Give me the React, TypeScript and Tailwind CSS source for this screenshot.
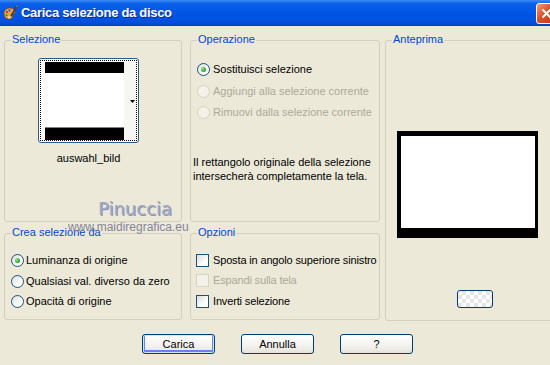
import React from "react";

const FONT = { fontFamily: '"Liberation Sans", Arial, sans-serif' };

function GroupBox({
  label,
  className,
  children,
}: {
  label: string;
  className?: string;
  children?: React.ReactNode;
}) {
  return (
    <div className={`relative rounded-[3px] border border-[#D0D0BF] ${className ?? ""}`}>
      <span className="absolute -top-[8px] left-[6px] whitespace-nowrap bg-[#ECE9D8] px-[1px] text-[11px] leading-[13px] text-[#0046D5]">
        {label}
      </span>
      {children}
    </div>
  );
}

function Radio({
  label,
  checked,
  disabled,
  className,
  gap = "gap-[3px]",
}: {
  label: string;
  checked?: boolean;
  disabled?: boolean;
  className?: string;
  gap?: string;
}) {
  return (
    <div className={`flex h-[13px] items-center ${gap} ${className ?? ""}`}>
      <span
        className={`flex h-[13px] w-[13px] shrink-0 items-center justify-center rounded-full border ${
          disabled
            ? "border-[#D5D3C6] bg-[#F3F1E8]"
            : "border-[#1C5180] bg-[linear-gradient(135deg,#dcdcd7,#ffffff_70%)]"
        }`}
      >
        {checked && (
          <span className="h-[5px] w-[5px] rounded-full bg-[radial-gradient(circle_at_35%_35%,#8ee88e,#21a121_70%)]" />
        )}
      </span>
      <span
        className={`whitespace-nowrap text-[11px] leading-[13px] ${
          disabled ? "text-[#ACA899]" : "text-black"
        }`}
      >
        {label}
      </span>
    </div>
  );
}

function Check({
  label,
  disabled,
  className,
}: {
  label: string;
  disabled?: boolean;
  className?: string;
}) {
  return (
    <div className={`flex h-[13px] items-center gap-[4px] ${className ?? ""}`}>
      <span
        className={`h-[13px] w-[13px] shrink-0 border ${
          disabled
            ? "border-[#D5D3C6] bg-[#F3F1E8]"
            : "border-[#1C5180] bg-[linear-gradient(135deg,#dcdcd7,#ffffff_70%)]"
        }`}
      />
      <span
        className={`whitespace-nowrap text-[11px] leading-[13px] tracking-[-0.15px] ${
          disabled ? "text-[#ACA899]" : "text-black"
        }`}
      >
        {label}
      </span>
    </div>
  );
}

function XpButton({ label, primary }: { label: string; primary?: boolean }) {
  return (
    <button
      type="button"
      className={`h-[20px] w-[73px] rounded-[3px] border border-[#003C74] bg-[linear-gradient(to_bottom,#ffffff,#f3f2ee_60%,#e4e2d8)] text-[11px] leading-[13px] text-black ${
        primary ? "shadow-[inset_0_0_0_1px_#cee7ff,inset_0_-1px_0_2px_#6982ee]" : ""
      }`}
    >
      {label}
    </button>
  );
}

function PaletteIcon() {
  return (
    <svg width="16" height="16" viewBox="0 0 16 16">
      <path
        d="M2 9c0-4 3-6 6-6 3 0 5 2 5 4 0 2-2 2-3 2-1 0-1 1 0 2 1 1 0 3-3 3-3 0-5-2-5-5z"
        fill="#E8A64A"
        stroke="#8A4A12"
        strokeWidth="0.8"
      />
      <circle cx="5" cy="7" r="1.1" fill="#D02020" />
      <circle cx="7.5" cy="5.4" r="1.1" fill="#2060E0" />
      <circle cx="4.6" cy="10.2" r="1.1" fill="#20A030" />
      <circle cx="7" cy="12.5" r="1" fill="#F0F0F0" />
      <path d="M9 11 L15 1" stroke="#5A3A1A" strokeWidth="1.6" />
      <path d="M14 1 L15.5 0.5 L15 2 Z" fill="#C0C0C0" />
    </svg>
  );
}

export default function App() {
  return (
    <div className="relative h-[365px] w-[550px] overflow-hidden bg-[#ECE9D8]" style={FONT}>
      {/* =====================================
          Title bar
      ====================================== */}

      <div className="flex h-[26px] items-center bg-[linear-gradient(to_bottom,#3b8cf5_0%,#0a5fe8_14%,#0055e5_50%,#0050dc_86%,#0a43b8_100%)] pl-[2px]">
        <PaletteIcon />
        <span className="ml-[3px] text-[13px] font-bold leading-[16px] tracking-[-0.3px] text-white [text-shadow:1px_1px_0_#0a2a8a]">
          Carica selezione da disco
        </span>
        <div className="-mr-[7px] ml-auto flex h-[21px] w-[21px] items-center justify-center rounded-[3px] border border-white bg-[linear-gradient(135deg,#f09a80,#d9502c_45%,#c23a18)]">
          <svg width="11" height="11" viewBox="0 0 11 11">
            <path d="M1.5 1.5 L9.5 9.5 M9.5 1.5 L1.5 9.5" stroke="white" strokeWidth="2" />
          </svg>
        </div>
      </div>

      {/* =====================================
          Panels
      ====================================== */}

      <div className="flex pl-[4px] pt-[14px]">
        <div className="grid grid-cols-[178px_190px] grid-rows-[182px_87px] gap-x-[8px] gap-y-[11px]">
          <GroupBox label="Selezione">
            <div className="ml-[33px] mt-[17px] w-[101px]">
              <div className="relative flex h-[85px] w-[101px] rounded-[3px] border border-[#2E5A8C] bg-white pb-[2px] pl-[6px] pt-[3px]">
                <div className="pointer-events-none absolute inset-[1px] border border-dotted border-black" />
                <div className="flex w-[79px] flex-col">
                  <div className="h-[11px] bg-black" />
                  <div className="flex-1 bg-white" />
                  <div className="h-[1px] bg-[#808080]" />
                  <div className="h-[12px] bg-black" />
                </div>
                <div className="relative flex w-[12px] items-center justify-end bg-[#F6F6F3] pr-[1px]">
                  <svg width="5" height="3" viewBox="0 0 5 3">
                    <path d="M0 0 L5 0 L2.5 3 Z" fill="black" />
                  </svg>
                </div>
              </div>
              <div className="mt-[9px] text-center text-[11px] leading-[13px] text-black">
                auswahl_bild
              </div>
            </div>
          </GroupBox>

          <GroupBox label="Operazione">
            <div className="pl-[6px]">
              <Radio label="Sostituisci selezione" checked className="mt-[22px]" />
              <Radio label="Aggiungi alla selezione corrente" disabled className="mt-[9px]" />
              <Radio label="Rimuovi dalla selezione corrente" disabled className="mt-[8px]" />
            </div>
            <p className="mt-[36px] pl-[2px] text-[11px] leading-[14px] text-black">
              Il rettangolo originale della selezione
              <br />
              intersecherà completamente la tela.
            </p>
          </GroupBox>

          <GroupBox label="Crea selezione da">
            <div className="pl-[6px]">
              <Radio label="Luminanza di origine" checked gap="gap-[2px]" className="mt-[20px]" />
              <Radio label="Qualsiasi val. diverso da zero" gap="gap-[2px]" className="mt-[8px]" />
              <Radio label="Opacità di origine" gap="gap-[2px]" className="mt-[7px]" />
            </div>
          </GroupBox>

          <GroupBox label="Opzioni">
            <div className="pl-[5px]">
              <Check label="Sposta in angolo superiore sinistro" className="mt-[20px]" />
              <Check label="Espandi sulla tela" disabled className="mt-[7px]" />
              <Check label="Inverti selezione" className="mt-[8px]" />
            </div>
          </GroupBox>
        </div>

        <GroupBox label="Anteprima" className="ml-[5px] h-[281px] w-[170px] shrink-0">
          <div className="ml-[11px] mt-[90px] h-[107px] w-[141px] border-b-[10px] border-l-[4px] border-r-[3px] border-t-[5px] border-black bg-white" />
          <div className="ml-[71px] mt-[52px] h-[18px] w-[36px] rounded-[3px] border border-[#003C74] bg-[repeating-conic-gradient(#e6e6e6_0_25%,#ffffff_0_50%)] bg-[length:8px_8px]" />
        </GroupBox>
      </div>

      {/* =====================================
          Buttons
      ====================================== */}

      <div className="mt-[13px] flex gap-[26px] pl-[142px]">
        <XpButton label="Carica" primary />
        <XpButton label="Annulla" />
        <XpButton label="?" />
      </div>

      {/* =====================================
          Watermark
      ====================================== */}

      <div className="pointer-events-none absolute left-[98px] top-[199px] text-[18px] leading-[20px] text-[#A3A9C6] [font-family:'DejaVu_Sans',sans-serif] [text-shadow:1px_1px_0_#8c93b0]">
        Pinuccia
      </div>
      <div className="pointer-events-none absolute left-[68px] top-[220px] text-[12px] leading-[14px] text-[#85859A]">
        www.maidiregrafica.eu
      </div>
    </div>
  );
}
